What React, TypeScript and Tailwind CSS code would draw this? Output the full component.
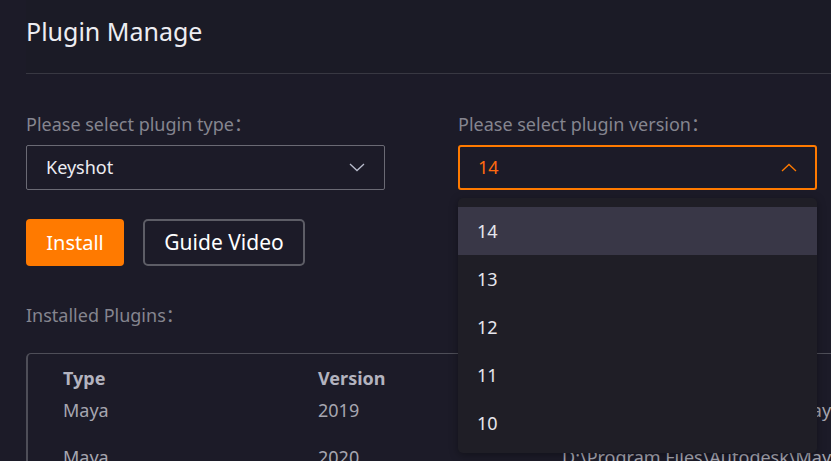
import React from 'react';

const versions = ['14', '13', '12', '11', '10'];

const rows = [
  { type: 'Maya', version: '2019', path: 'D:\\Program Files\\Autodesk\\Maya2019\\bin\\plug-ins' },
  { type: 'Maya', version: '2020', path: 'D:\\Program Files\\Autodesk\\Maya2020\\bin\\plug-ins' },
];

function Chevron({ up, color }: { up?: boolean; color: string }) {
  return (
    <svg width="16" height="9" viewBox="0 0 16 9" fill="none">
      <polyline
        points={up ? '1,8 8,1.5 15,8' : '1,1 8,7.5 15,1'}
        stroke={color}
        strokeWidth="1.3"
        strokeLinejoin="miter"
      />
    </svg>
  );
}

export default function App() {
  return (
    <div
      className="relative w-[831px] h-[461px] overflow-hidden bg-[#1c1b28] pl-[26px]"
      style={{ fontFamily: '"Noto Sans", "Open Sans", "Noto Sans CJK SC", sans-serif' }}
    >
      <div className="h-[74px] flex items-center border-b border-[#383842] bg-[#1b1b26]">
        <h1 className="text-[25px] text-[#ededf2] -mt-[10px]">Plugin Manage</h1>
      </div>

      <div className="flex gap-[73px] mt-[38px]">
        <div className="w-[359px]">
          <div className="text-[18px] text-[#85858f] leading-[24px]">Please select plugin type：</div>
          <div className="mt-[9px] h-[45px] border border-[#6a6a74] rounded-[2px] flex items-center justify-between pl-[19px] pr-[19px]">
            <span className="text-[18px] text-[#ececf2]">Keyshot</span>
            <Chevron color="#b8bccc" />
          </div>
        </div>
        <div className="w-[359px]">
          <div className="text-[18px] text-[#85858f] leading-[24px]">Please select plugin version：</div>
          <div className="mt-[9px] h-[45px] border-2 border-[#ff7a00] rounded-[3px] flex items-center justify-between pl-[18px] pr-[18px]">
            <span className="text-[18px] text-[#ff6a10]">14</span>
            <Chevron up color="#ff7a00" />
          </div>
        </div>
      </div>

      <div className="flex gap-[19px] mt-[29px]">
        <button className="w-[98px] h-[47px] bg-[#ff7a00] rounded-[4px] text-[20px] text-white">Install</button>
        <button className="w-[162px] h-[47px] border-2 border-[#5d5d66] rounded-[5px] text-[21px] text-white">
          Guide Video
        </button>
      </div>

      <div className="mt-[37px] text-[18px] text-[#85858f] leading-[24px]">Installed Plugins：</div>

      <div className="mt-[26px] border-l-2 border-t border-[#4e4e58] rounded-tl-[5px] pl-[35px] pt-[12px] text-[18px]">
        <div className="flex h-[24px] items-center font-bold text-[#b3b3bf]">
          <div className="w-[255px]">Type</div>
          <div className="w-[244px]">Version</div>
          <div>Path</div>
        </div>
        {rows.map((r, i) => (
          <div key={i} className="flex h-[47px] pt-[7px] text-[#a6a6b0] whitespace-nowrap">
            <div className="w-[255px] shrink-0">{r.type}</div>
            <div className="w-[244px] shrink-0">{r.version}</div>
            <div>{r.path}</div>
          </div>
        ))}
      </div>

      <div className="absolute left-[458px] top-[198px] w-[359px] h-[255px] bg-[#1f1e26] rounded-[5px] py-[9px] shadow-[0_2px_8px_rgba(0,0,0,0.35)]">
        {versions.map((v, i) => (
          <div
            key={v}
            className={`h-[48px] flex items-center pl-[19px] text-[18px] text-[#e6e6ec] ${i === 0 ? 'bg-[#393747]' : ''}`}
          >
            {v}
          </div>
        ))}
      </div>
    </div>
  );
}
